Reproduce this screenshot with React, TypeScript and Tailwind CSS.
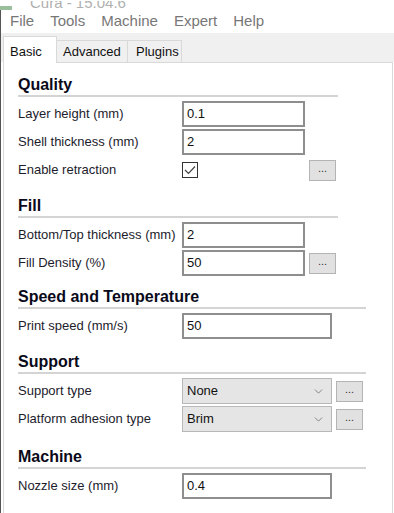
import React from 'react';
import { ChevronDown } from 'lucide-react';

const font = { fontFamily: '"Liberation Sans", Arial, sans-serif' };

function SectionHeader({ title, width, mt }: { title: string; width: string; mt: string }) {
  return (
    <div className={`${width} ${mt} mb-[4px] h-[22px] border-b-2 border-[#d4d4d4] text-[16px] font-bold leading-[20px] text-[#0a0a1a]`}>
      {title}
    </div>
  );
}

function Row({ label, children }: { label: string; children: React.ReactNode }) {
  return (
    <div className="flex h-[26px] items-center">
      <div className="w-[164px] shrink-0 text-[13px] text-[#1c1c2c]">{label}</div>
      {children}
    </div>
  );
}

function TextBox({ value, wide }: { value: string; wide?: boolean }) {
  return (
    <div
      className={`${wide ? 'w-[150px]' : 'w-[123px]'} flex h-[26px] items-center border-2 border-[#8e8e8e] bg-white pl-[3px] text-[13px] text-[#111]`}
    >
      {value}
    </div>
  );
}

function DotsButton() {
  return (
    <div className="ml-[4px] flex h-[21px] w-[27px] items-center justify-center border border-[#b4b4b4] bg-[#e1e1e1] pb-[4px] text-[11px] text-[#333]">
      ...
    </div>
  );
}

function Select({ value }: { value: string }) {
  return (
    <div className="flex h-[26px] w-[150px] items-center justify-between border border-[#b8b8b8] bg-[#e5e5e5] pl-[4px] pr-[6px] text-[13px] text-[#111]">
      <span>{value}</span>
      <ChevronDown className="h-[13px] w-[13px] text-[#707070]" strokeWidth={1.5} />
    </div>
  );
}

export default function App() {
  return (
    <div className="h-[513px] w-[394px] overflow-hidden bg-white" style={font}>
      {/* window title, mostly cut off */}
      <div className="flex h-[10px] items-end overflow-hidden">
        <div className="h-[4px] w-[12px] bg-[#9bbf9b]" />
        <div className="ml-[18px] -mb-[1px] h-[10px] overflow-hidden text-[15px] leading-[16px] text-[#b0b0b0]">
          <div className="-mt-[6px]">Cura - 15.04.6</div>
        </div>
      </div>

      <div className="border-l border-[#555]">
        {/* menu */}
        <div className="flex h-[23px] items-center gap-[16px] pl-[9px] text-[15px] text-[#777]">
          <span>File</span>
          <span>Tools</span>
          <span>Machine</span>
          <span>Expert</span>
          <span>Help</span>
        </div>

        {/* tabs */}
        <div className="flex h-[29px] items-end bg-[#f0f0f0] pl-[2px]">
          <div className="relative z-10 -mb-[1px] flex h-[27px] w-[54px] items-start border border-b-0 border-[#d9d9d9] bg-white pl-[6px] pt-[5px] text-[13px] text-[#111]">
            Basic
          </div>
          <div className="flex h-[22px] w-[71px] items-center border border-b-0 border-l-0 border-[#d9d9d9] pl-[6px] text-[13px] text-[#111]">
            Advanced
          </div>
          <div className="flex h-[22px] w-[54px] items-center border border-b-0 border-l-0 border-[#d9d9d9] pl-[8px] text-[13px] text-[#111]">
            Plugins
          </div>
        </div>

        {/* panel */}
        <div className="ml-[2px] mr-[1px] h-[460px] border-l border-r border-t border-[#d9d9d9] pl-[14px]">
          <SectionHeader title="Quality" width="w-[320px]" mt="mt-[12px]" />
          <div className="flex flex-col gap-[2px]">
            <Row label="Layer height (mm)">
              <TextBox value="0.1" />
            </Row>
            <Row label="Shell thickness (mm)">
              <TextBox value="2" />
            </Row>
            <Row label="Enable retraction">
              <div className="flex w-[123px] items-center">
                <div className="flex h-[16px] w-[16px] items-center justify-center border border-[#333] bg-white">
                  <svg width="12" height="10" viewBox="0 0 12 10">
                    <path d="M1 5 L4.5 8.5 L11 1.5" fill="none" stroke="#444" strokeWidth="1.2" />
                  </svg>
                </div>
              </div>
              <DotsButton />
            </Row>
          </div>

          <SectionHeader title="Fill" width="w-[320px]" mt="mt-[13px]" />
          <div className="flex flex-col gap-[2px]">
            <Row label="Bottom/Top thickness (mm)">
              <TextBox value="2" />
            </Row>
            <Row label="Fill Density (%)">
              <TextBox value="50" />
              <DotsButton />
            </Row>
          </div>

          <SectionHeader title="Speed and Temperature" width="w-[348px]" mt="mt-[11px]" />
          <div className="flex flex-col gap-[2px]">
            <Row label="Print speed (mm/s)">
              <TextBox value="50" wide />
            </Row>
          </div>

          <SectionHeader title="Support" width="w-[348px]" mt="mt-[13px]" />
          <div className="flex flex-col gap-[2px]">
            <Row label="Support type">
              <Select value="None" />
              <DotsButton />
            </Row>
            <Row label="Platform adhesion type">
              <Select value="Brim" />
              <DotsButton />
            </Row>
          </div>

          <SectionHeader title="Machine" width="w-[348px]" mt="mt-[15px]" />
          <div className="flex flex-col gap-[2px]">
            <Row label="Nozzle size (mm)">
              <TextBox value="0.4" wide />
            </Row>
          </div>
        </div>
      </div>
    </div>
  );
}
